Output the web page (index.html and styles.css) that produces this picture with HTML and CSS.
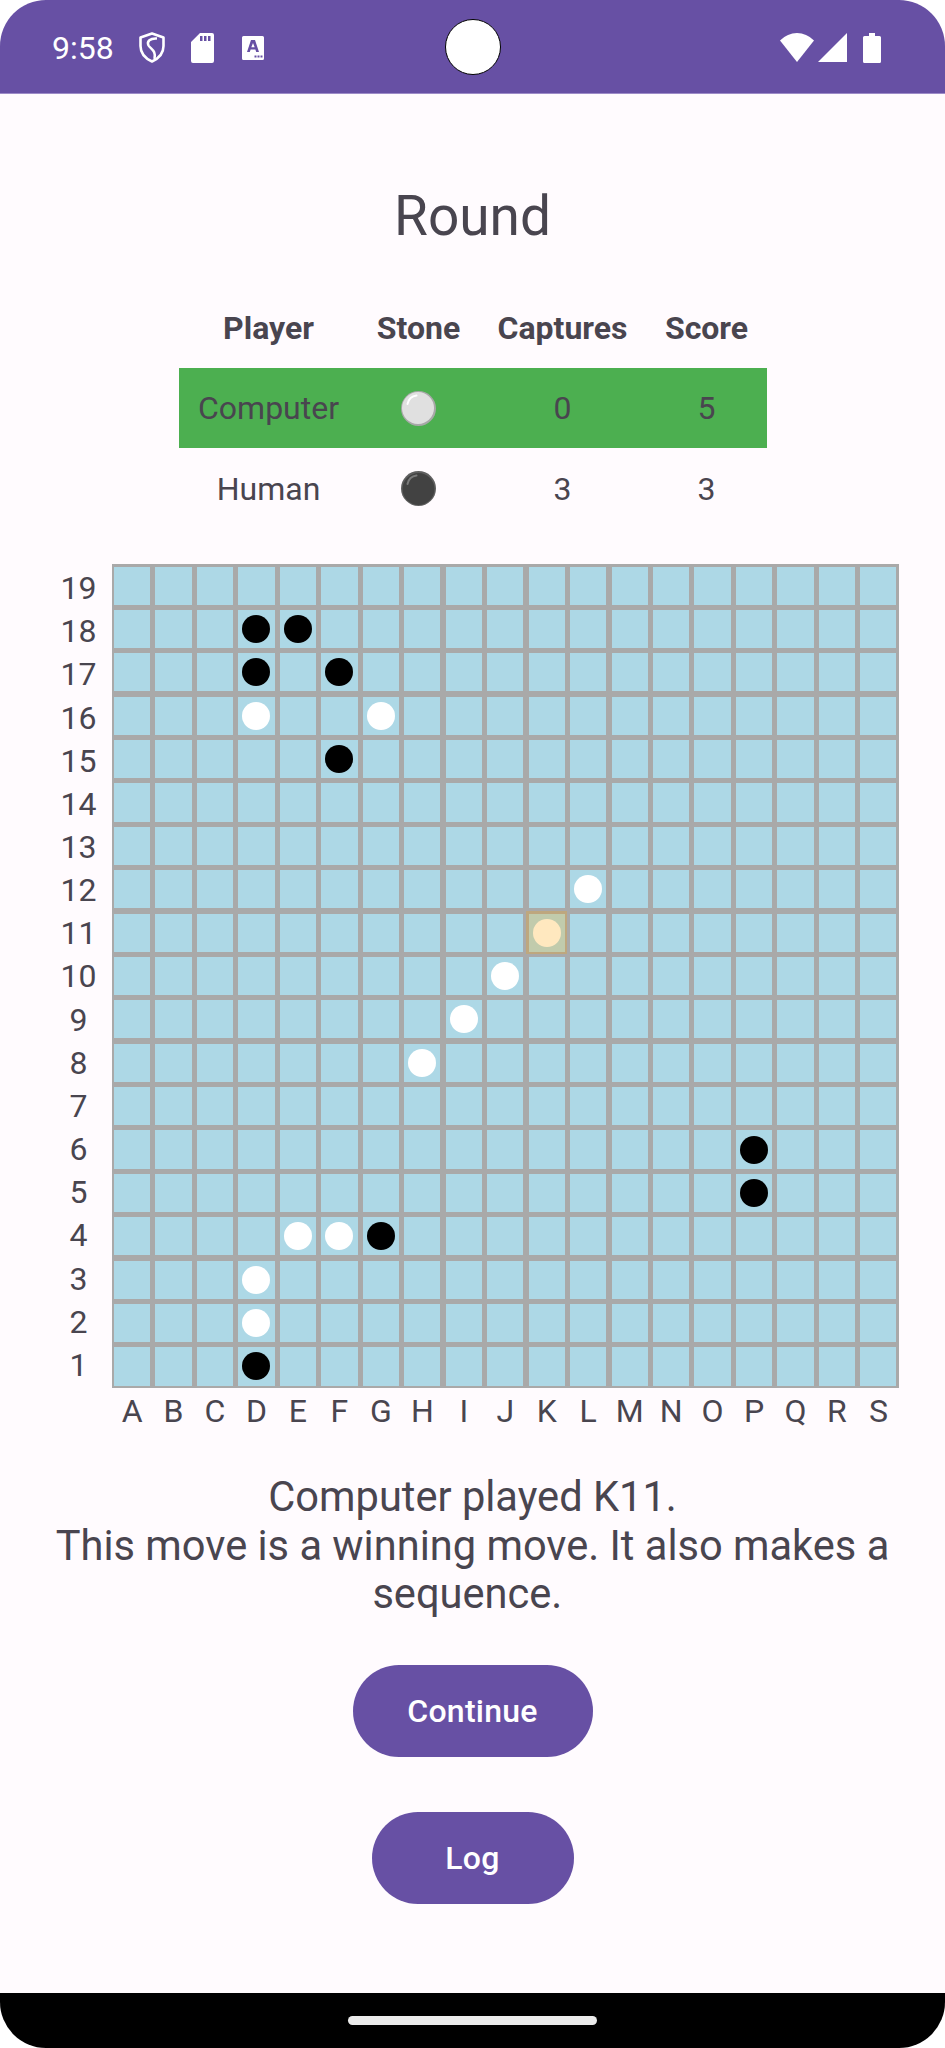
FILE: index.html
```html
<!DOCTYPE html>
<html lang="en">
<head>
  <meta charset="UTF-8">
  <title>Round</title>
  <link rel="stylesheet" href="styles.css">
</head>
<body>
<div class="phone">
  <div class="status">
    <span class="time">9:58</span>
    <svg class="ic-shield" viewBox="0 0 26 31"><path d="M13 1.500 24.500 5.500V14C24.500 21.500 19.500 26.500 13 29.500 6.500 26.500 1.500 21.500 1.500 14V5.500Z" fill="none" stroke="#fff" stroke-width="2.6" stroke-linejoin="round"/><path d="M18 6.500C11 6 7.500 9.500 9.500 13.500 11.500 17 17.500 18.500 15.500 27" fill="none" stroke="#fff" stroke-width="2.5"/></svg>
    <svg class="ic-sd" viewBox="0 0 23 30"><path fill-rule="evenodd" d="M9 0H21Q23 0 23 2V28Q23 30 21 30H2Q0 30 0 28V9ZM9 3V8H11.500V3ZM13 3V8H15.500V3ZM17 3V8H19.500V3Z" fill="#fff"/></svg>
    <svg class="ic-a" viewBox="0 0 22 24"><path fill-rule="evenodd" d="M1.500 0H20.500Q22 0 22 1.500V22.500Q22 24 20.500 24H1.500Q0 24 0 22.500V1.500Q0 0 1.500 0ZM9 4 5 16H7.800L8.600 13.400H13.400L14.200 16H17L13 4ZM11 7 12.700 11.300H9.300ZM12.500 19.500V21.500H14.500V19.500ZM15.500 19.500V21.500H17.500V19.500ZM18.500 19.500V21.500H20.500V19.500Z" fill="#fff"/></svg>
    <span class="status-right">
      <svg class="ic-wifi" viewBox="0 0 34 29"><path d="M0 7.500Q7.500 0 17 0 26.500 0 34 7.500L17 29Z" fill="#fff"/></svg>
      <svg class="ic-signal" viewBox="0 0 29 29"><path d="M29 0V29H0Z" fill="#fff"/></svg>
      <svg class="ic-battery" viewBox="0 0 18 30"><path d="M6 0H12V3H16.500Q18 3 18 4.500V28.500Q18 30 16.500 30H1.500Q0 30 0 28.500V4.500Q0 3 1.500 3H6Z" fill="#fff"/></svg>
    </span>
    <div class="camera"></div>
  </div>

  <div class="content">
    <h1 class="title">Round</h1>

    <table class="scores">
      <tr>
        <th class="col-player">Player</th>
        <th class="col-stone">Stone</th>
        <th class="col-captures">Captures</th>
        <th class="col-score">Score</th>
      </tr>
      <tr class="current">
        <td>Computer</td>
        <td><svg class="emoji" viewBox="0 0 35 35"><circle cx="17.500" cy="17.500" r="17.500" fill="#a8a8a8"/><circle cx="17" cy="17" r="16" fill="#e0e0e0"/><path d="M6.500 13C7.500 8.500 11 5 15.500 4.500" fill="none" stroke="#fff" stroke-width="2" stroke-linecap="round"/></svg></td>
        <td>0</td>
        <td>5</td>
      </tr>
      <tr>
        <td>Human</td>
        <td><svg class="emoji" viewBox="0 0 35 35"><circle cx="17.500" cy="17.500" r="17.500" fill="#5f5f5f"/><circle cx="17.500" cy="18" r="16" fill="#424242"/><path d="M6.500 13C7.500 8.500 11 5 15.500 4.500" fill="none" stroke="#7a7a7a" stroke-width="2" stroke-linecap="round"/></svg></td>
        <td>3</td>
        <td>3</td>
      </tr>
    </table>

    <div class="board-area">
      <div class="rows">
        <span>19</span><span>18</span><span>17</span><span>16</span><span>15</span>
        <span>14</span><span>13</span><span>12</span><span>11</span><span>10</span>
        <span>9</span><span>8</span><span>7</span><span>6</span><span>5</span>
        <span>4</span><span>3</span><span>2</span><span>1</span>
      </div>
      <div class="board" id="board"></div>
      <div class="cols">
        <span>A</span><span>B</span><span>C</span><span>D</span><span>E</span>
        <span>F</span><span>G</span><span>H</span><span>I</span><span>J</span>
        <span>K</span><span>L</span><span>M</span><span>N</span><span>O</span>
        <span>P</span><span>Q</span><span>R</span><span>S</span>
      </div>
    </div>

    <p class="message">Computer played K11.<br>This move is a winning move. It also makes a sequence.&nbsp;</p>

    <button class="btn btn-continue">Continue</button>
    <button class="btn btn-log">Log</button>
  </div>

  <div class="nav"><div class="pill"></div></div>
</div>
<script src="board.js"></script>
</body>
</html>
```

FILE: styles.css
```css
* {
  padding: 0;
  margin: 0;
  box-sizing: border-box;
}

html, body {
  background: #fff;
}

body {
  width: 945px;
  height: 2048px;
  overflow: hidden;
  font-family: Roboto, "Liberation Sans", sans-serif;
  color: #49454f;
}

.phone {
  width: 945px;
  height: 2048px;
  border-radius: 46px;
  overflow: hidden;
  display: flex;
  flex-direction: column;
  background: #fffbfe;
}

/* status bar */
.status {
  height: 94px;
  flex: none;
  background: #6750a4;
  border-bottom: 1px solid #9d8bc8;
  position: relative;
  display: flex;
  align-items: center;
  padding: 2px 64px 0 52px;
  color: #fff;
}

.time {
  font-size: 32px;
  width: 87px;
}

.ic-shield { width: 26px; height: 31px; margin-right: 26px; }
.ic-sd { width: 23px; height: 30px; margin-right: 28px; }
.ic-a { width: 22px; height: 24px; }

.status-right {
  margin-left: auto;
  display: flex;
  align-items: center;
}

.ic-wifi { width: 34px; height: 29px; margin-right: 4px; }
.ic-signal { width: 29px; height: 29px; margin-right: 16px; }
.ic-battery { width: 18px; height: 30px; }

.camera {
  position: absolute;
  left: 445px;
  top: 19px;
  width: 56px;
  height: 56px;
  border-radius: 50%;
  background: #fff;
  border: 1px solid #000;
}

/* page */
.content {
  flex: 1;
  display: flex;
  flex-direction: column;
  align-items: center;
}

.title {
  font-size: 55px;
  font-weight: 400;
  line-height: 64px;
  margin-top: 90px;
}

.scores {
  border-collapse: collapse;
  margin-top: 39px;
  width: 588px;
  table-layout: fixed;
  font-size: 32px;
  text-align: center;
}

.scores th {
  height: 81px;
  font-weight: 700;
}

.scores td {
  height: 80px;
  padding: 0;
}

.scores tr:last-child td {
  height: 81px;
}

.col-player { width: 180px; }
.col-stone { width: 120px; }
.col-captures { width: 168px; }
.col-score { width: 120px; }

.current {
  background: #4caf50;
}

.emoji {
  display: block;
  width: 35px;
  height: 35px;
  margin: 0 auto;
}

/* board */
.board-area {
  align-self: flex-start;
  margin-top: 35px;
  margin-left: 60.5px;
  display: grid;
  grid-template-columns: 36px 787.5px;
  column-gap: 15px;
  row-gap: 4px;
}

.rows {
  display: grid;
  grid-template-rows: repeat(19, 1fr);
  row-gap: 5px;
  padding: 5px 0 4px;
  height: 824px;
  font-size: 32px;
  text-align: center;
}

.rows span {
  display: flex;
  align-items: center;
  justify-content: center;
  line-height: 1;
}

.board {
  height: 824px;
  display: grid;
  grid-template-columns: repeat(19, 1fr);
  grid-template-rows: repeat(19, 1fr);
  gap: 5.25px;
  padding: 2.5px;
  background: #a9a9a9;
}

.cell {
  background: #add8e6;
  display: flex;
  align-items: center;
  justify-content: center;
  position: relative;
}

.stone {
  width: 28px;
  height: 28px;
  border-radius: 50%;
}

.stone.black { background: #000; }
.stone.white { background: #fff; }

.cell.last::after {
  content: "";
  position: absolute;
  left: -2.5px;
  right: -2.5px;
  top: -2.5px;
  bottom: -2.5px;
  background: rgba(255, 165, 0, 0.25);
}

.cols {
  grid-column: 2;
  display: grid;
  grid-template-columns: repeat(19, 1fr);
  column-gap: 5.25px;
  padding: 0 2.5px;
  font-size: 32px;
  line-height: 38px;
  text-align: center;
}

/* bottom part */
.message {
  width: 860px;
  margin-top: 43px;
  font-size: 41.6px;
  line-height: 48.500px;
  text-align: center;
}

.btn {
  display: block;
  border: 0;
  height: 92px;
  border-radius: 46px;
  background: #6750a4;
  color: #fff;
  font-family: Roboto, "Liberation Sans", sans-serif;
  font-size: 32px;
  font-weight: 500;
  letter-spacing: 0.25px;
}

.btn-continue {
  width: 240px;
  margin-top: 46px;
}

.btn-log {
  width: 202px;
  margin-top: 55px;
}

.nav {
  height: 55px;
  flex: none;
  background: #000;
  display: flex;
  justify-content: center;
  padding-top: 23px;
}

.pill {
  width: 249px;
  height: 9px;
  border-radius: 5px;
  background: #ebebeb;
}
```

FILE: board.js
```js
var letters='ABCDEFGHIJKLMNOPQRS';
var blacks=['D18','E18','D17','F17','F15','P6','P5','G4','D1'];
var whites=['D16','G16','L12','J10','I9','H8','E4','F4','D3','D2','K11'];
var lastMove='K11';

var board=document.getElementById('board');

for(var row=19;row>=1;row--){
  for(var c=0;c<letters.length;c++){
    var name=letters[c]+row;
    var cell=document.createElement('div');
    cell.className='cell';
    if(name==lastMove){
      cell.className='cell last';
    }
    if(blacks.indexOf(name)>=0||whites.indexOf(name)>=0){
      var stone=document.createElement('div');
      stone.className=blacks.indexOf(name)>=0?'stone black':'stone white';
      cell.appendChild(stone);
    }
    board.appendChild(cell);
  }
}
```
